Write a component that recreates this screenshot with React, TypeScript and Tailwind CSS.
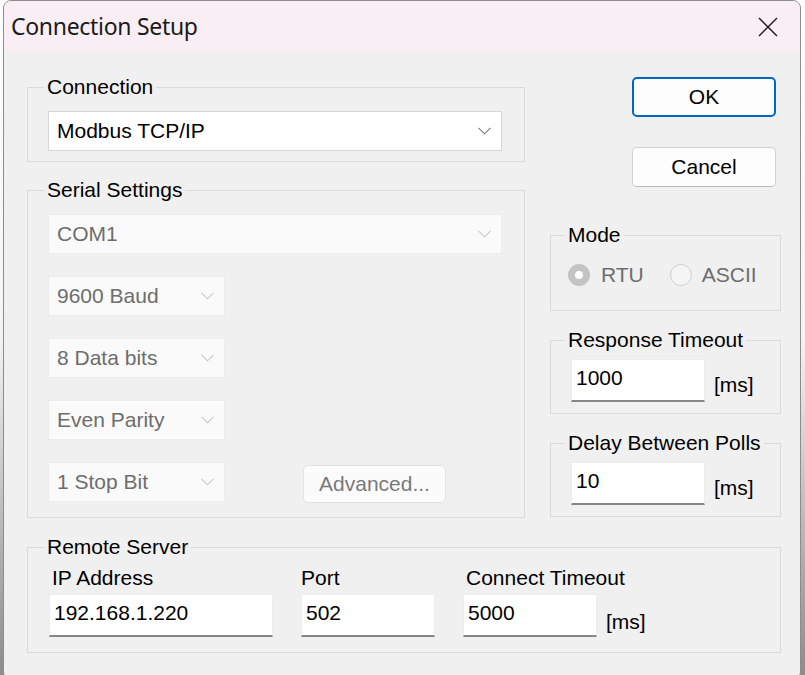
import type { ReactNode } from 'react'

const Chevron = ({ disabled }: { disabled?: boolean }) => (
  <svg width="13" height="8" viewBox="0 0 13 8" className="shrink-0">
    <polyline points="0.5,0.8 6.5,6.8 12.5,0.8" fill="none" stroke={disabled ? '#c8c8c8' : '#7a7a7a'} strokeWidth="1.1" />
  </svg>
)

const Combo = ({ text, width, disabled }: { text: string; width: string; disabled?: boolean }) => (
  <div
    className={`${width} h-[40px] flex items-center justify-between pl-[8px] pr-[10px] ${
      disabled ? 'bg-[#fafafa] border border-[#ececec] text-[#6d6d6d]' : 'bg-white border border-[#d6d6d6] text-black'
    }`}
  >
    <span>{text}</span>
    <Chevron disabled={disabled} />
  </div>
)

const GroupBox = ({ label, className, legend = 'ml-[16px]', children }: { label: string; className: string; legend?: string; children: ReactNode }) => (
  <fieldset className="border border-[#dadada] p-0 m-0 min-w-0">
    <legend className={`${legend} px-[3px] leading-[20px]`}>{label}</legend>
    <div className={className}>{children}</div>
  </fieldset>
)

const Field = ({ value, width }: { value: string; width: string }) => (
  <div className={`${width} h-[43px] bg-white border border-[#ececec] border-b-2 border-b-[#878787] pl-[4px] pt-[6px] leading-[24px] text-black`}>
    {value}
  </div>
)

const Radio = ({ checked }: { checked?: boolean }) =>
  checked ? (
    <div className="w-[22px] h-[22px] rounded-full bg-[#c4c4c4] flex items-center justify-center">
      <div className="w-[8px] h-[8px] rounded-full bg-white" />
    </div>
  ) : (
    <div className="w-[22px] h-[22px] rounded-full border border-[#cfcfcf] bg-[#f5f5f5]" />
  )

export default function App() {
  return (
    <div className="w-[805px] h-[675px] overflow-hidden bg-linear-to-b from-white via-[#f4f4f4] to-[#8c8c8c] font-['Liberation_Sans',Arial,sans-serif] text-[21px] text-black">
      <div className="ml-[3px] w-[798px] h-[680px] rounded-[8px] border border-[#8c8c8c] overflow-hidden bg-[#f0f0f0]">
        {/* title bar */}
        <div className="h-[51px] bg-[#f8eef3] flex items-center justify-between pl-[7px] pr-[22px]">
          <span className="font-['Noto_Sans',sans-serif] text-[23px] text-[#1a1a1a] tracking-[-0.3px]">Connection Setup</span>
          <svg width="20" height="20" viewBox="0 0 20 20">
            <path d="M1 1 L19 19 M19 1 L1 19" stroke="#1a1a1a" strokeWidth="1.4" fill="none" />
          </svg>
        </div>

        {/* body */}
        <div className="pl-[23px] pt-[25px]">
          <div className="flex gap-[25px]">
            {/* left column */}
            <div className="w-[498px] flex flex-col gap-[18px]">
              <GroupBox label="Connection" className="pl-[20px] pt-[14px] pb-[10px]">
                <Combo text="Modbus TCP/IP" width="w-[454px]" />
              </GroupBox>
              <GroupBox label="Serial Settings" className="pl-[20px] pt-[14px] pb-[14px] flex flex-col gap-[22px]">
                <Combo text="COM1" width="w-[454px]" disabled />
                <Combo text="9600 Baud" width="w-[177px]" disabled />
                <Combo text="8 Data bits" width="w-[177px]" disabled />
                <Combo text="Even Parity" width="w-[177px]" disabled />
                <div className="flex items-start gap-[78px]">
                  <Combo text="1 Stop Bit" width="w-[177px]" disabled />
                  <div className="mt-[3px] w-[143px] h-[38px] rounded-[5px] bg-[#fbfbfb] border border-[#e3e3e3] flex items-center justify-center text-[#7a7a7a]">
                    Advanced...
                  </div>
                </div>
              </GroupBox>
            </div>

            {/* right column */}
            <div className="w-[231px] flex flex-col">
              <div className="ml-[82px] w-[144px] h-[40px] rounded-[5px] border-2 border-[#0067c0] bg-[#fdfdfd] flex items-center justify-center">
                OK
              </div>
              <div className="ml-[82px] mt-[30px] w-[144px] h-[40px] rounded-[5px] border border-[#d0d0d0] border-b-[#b8b8b8] bg-[#fdfdfd] flex items-center justify-center">
                Cancel
              </div>
              <div className="mt-[38px] flex flex-col gap-[19px]">
                <GroupBox label="Mode" legend="ml-[14px]" className="pl-[17px] pt-[19px] pb-[24px] flex items-center text-[#6d6d6d]">
                  <Radio checked />
                  <span className="ml-[11px] leading-[22px]">RTU</span>
                  <span className="ml-[26px]">
                    <Radio />
                  </span>
                  <span className="ml-[10px] leading-[22px]">ASCII</span>
                </GroupBox>
                <GroupBox label="Response Timeout" legend="ml-[14px]" className="pl-[20px] pt-[9px] pb-[11px] flex items-end gap-[9px]">
                  <Field value="1000" width="w-[134px]" />
                  <span className="pb-[6px] leading-[22px]">[ms]</span>
                </GroupBox>
                <GroupBox label="Delay Between Polls" legend="ml-[14px]" className="pl-[20px] pt-[9px] pb-[11px] flex items-end gap-[9px]">
                  <Field value="10" width="w-[134px]" />
                  <span className="pb-[6px] leading-[22px]">[ms]</span>
                </GroupBox>
              </div>
            </div>
          </div>

          {/* remote server */}
          <div className="w-[754px] mt-[19px]">
            <GroupBox label="Remote Server" className="pl-[21px] pt-[9px] pb-[15px] flex items-end gap-[28px]">
              <div className="flex flex-col gap-[4px]">
                <span className="pl-[3px] leading-[24px]">IP Address</span>
                <Field value="192.168.1.220" width="w-[224px]" />
              </div>
              <div className="flex flex-col gap-[4px]">
                <span className="leading-[24px]">Port</span>
                <Field value="502" width="w-[134px]" />
              </div>
              <div className="flex flex-col gap-[4px]">
                <span className="pl-[3px] leading-[24px]">Connect Timeout</span>
                <div className="flex items-end gap-[9px]">
                  <Field value="5000" width="w-[134px]" />
                  <span className="pb-[4px] leading-[22px]">[ms]</span>
                </div>
              </div>
            </GroupBox>
          </div>
        </div>
      </div>
    </div>
  )
}
